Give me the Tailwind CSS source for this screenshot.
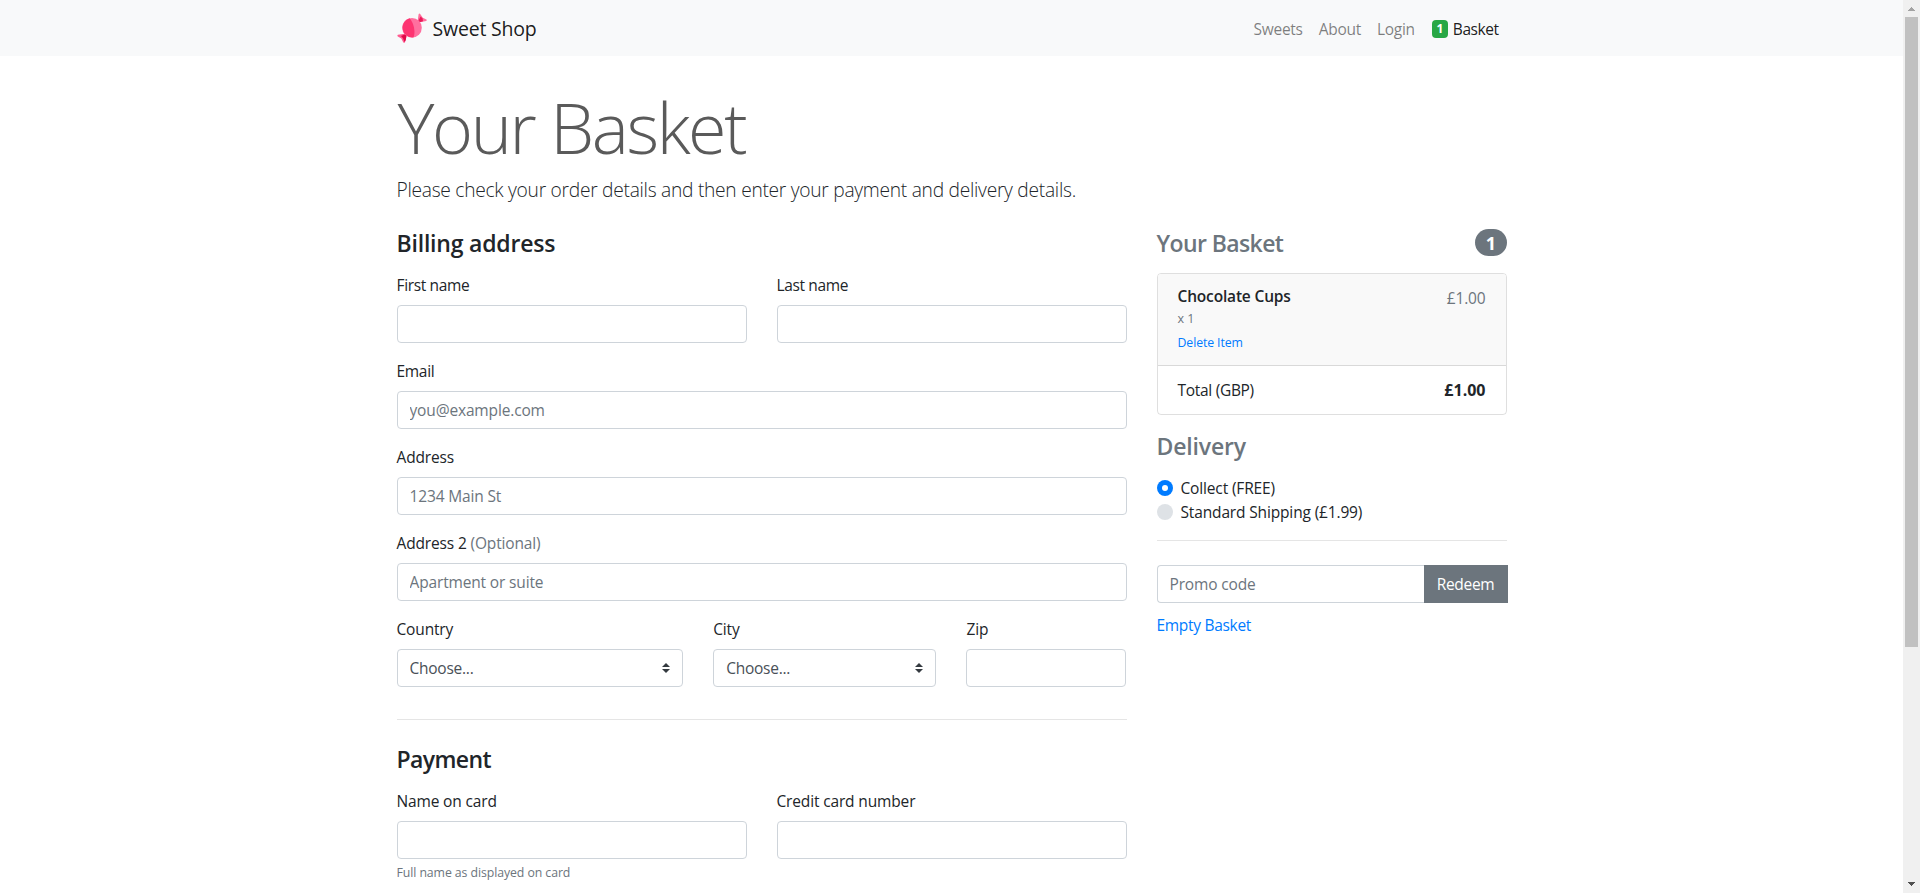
<!DOCTYPE html>
<html lang="en">
<head>
<meta charset="utf-8">
<title>Sweet Shop - Your Basket</title>
<script src="https://cdn.jsdelivr.net/npm/@tailwindcss/browser@4"></script>
</head>
<body class="flex h-[893px] overflow-hidden bg-white font-['Open_Sans','Noto_Sans',sans-serif] text-[15.5px] leading-6 tracking-[-0.15px] text-[#212529]">
<div class="h-full min-w-0 flex-1 overflow-hidden">
  <nav class="h-14 bg-[#f8f9fa]">
    <div class="mx-auto flex h-full w-[1110px] items-center justify-between">
      <a href="#" class="flex items-center text-[19.5px] leading-[30px] tracking-[-0.2px] text-black/90">
        <svg class="mr-[6px] size-[30px]" viewBox="0 0 30 30">
          <path d="M20.500 9 21.600 1.200Q22.200.2 23.200.9L25.800 4.800 29.400 6.400Q30.200 7.200 29.200 7.900L21.500 9.600Z" fill="#ff6f9c"/>
          <path d="M20.800 8.800 23.600 3.600 25.600 5.400 26 8.300 21.500 9.500Z" fill="#ea1a58"/>
          <path d="M9.500 20.500.9 21.800Q-.1 22.500.8 23.400L4.300 25.400 6.200 29.200Q7.200 30.200 8 29.200L10.200 21.300Z" fill="#ff5c90"/>
          <path d="M9.600 20.800 4 22.900 6 25.300 7.600 29 8.800 27Z" fill="#e00a48"/>
          <circle cx="15" cy="14.700" r="9.800" fill="#ff6f9f"/>
          <path d="M12.800 5.200A9.800 9.800 0 0 0 16.500 24.400C18.700 19 17 10.500 12.800 5.200Z" fill="#fd3471"/>
        </svg>
        <span class="pt-px">Sweet Shop</span>
      </a>
      <div class="flex items-center gap-4 pt-px pr-2 tracking-[-0.28px] text-black/50">
        <a href="#">Sweets</a>
        <a href="#">About</a>
        <a href="#" class="pr-px">Login</a>
        <a href="#" class="flex items-center tracking-[-0.45px] text-black/90"><span class="mr-[5px] flex h-[18px] w-4 items-center justify-center rounded-[4px] bg-[#28a745] text-[12px] leading-none font-bold text-white">1</span>Basket</a>
      </div>
    </div>
  </nav>
  <main class="mx-auto w-[1110px] pt-6">
    <h1 class="mb-2 ml-[1px] h-[86.4px] pt-[4px] text-[70px] leading-[86.4px] font-light tracking-[-2.4px] text-[#5a5a5a]">Your Basket</h1>
    <p class="mb-6 h-[30px] pt-px text-[19.2px] leading-[30px] font-light tracking-[-0.27px]">Please check your order details and then enter your payment and delivery details.</p>
    <div class="flex gap-[30px]">
      <form class="w-[730px] shrink-0">
        <h4 class="mb-4 h-[28.800px] pt-px text-[23px] leading-[28.800px] font-semibold tracking-[-0.2px]">Billing address</h4>
        <div class="mb-4 grid grid-cols-2 gap-[30px]">
          <div><label class="mb-2 block tracking-[-0.36px]">First name</label><input class="block h-[38px] w-full rounded-[4px] border border-[#ced4da] px-3"></div>
          <div><label class="mb-2 block tracking-[-0.36px]">Last name</label><input class="block h-[38px] w-full rounded-[4px] border border-[#ced4da] px-3"></div>
        </div>
        <div class="mb-4"><label class="mb-2 block tracking-[-0.3px]">Email</label><input placeholder="you@example.com" class="block h-[38px] w-full rounded-[4px] border border-[#ced4da] px-3 placeholder:text-[#6c757d]"></div>
        <div class="mb-4"><label class="mb-2 block">Address</label><input placeholder="1234 Main St" class="block h-[38px] w-full rounded-[4px] border border-[#ced4da] px-3 placeholder:text-[#6c757d]"></div>
        <div class="mb-4"><label class="mb-2 block">Address 2 <span class="text-[#6c757d]">(Optional)</span></label><input placeholder="Apartment or suite" class="block h-[38px] w-full rounded-[4px] border border-[#ced4da] px-3 placeholder:text-[#6c757d]"></div>
        <div class="flex gap-[30px]">
          <div class="w-[286.670px]"><label class="mb-2 block">Country</label>
            <div class="relative"><select class="block h-[38px] w-full appearance-none rounded-[4px] border border-[#ced4da] bg-white px-3 tracking-[-0.25px] text-[#495057]"><option>Choose...</option></select><svg class="absolute top-[14px] right-[13px] h-[10px] w-2" viewBox="0 0 4 5"><path fill="#343a40" d="M2 0L0 2h4zm0 5L0 3h4z"/></svg></div></div>
          <div class="w-[223.330px]"><label class="mb-2 block">City</label>
            <div class="relative"><select class="block h-[38px] w-full appearance-none rounded-[4px] border border-[#ced4da] bg-white px-3 tracking-[-0.25px] text-[#495057]"><option>Choose...</option></select><svg class="absolute top-[14px] right-[13px] h-[10px] w-2" viewBox="0 0 4 5"><path fill="#343a40" d="M2 0L0 2h4zm0 5L0 3h4z"/></svg></div></div>
          <div class="w-40"><label class="mb-2 block">Zip</label><input class="block h-[38px] w-full rounded-[4px] border border-[#ced4da] px-3"></div>
        </div>
        <hr class="mt-8 mb-6 border-t border-black/10">
        <h4 class="mb-4 h-[28.800px] pt-px text-[23px] leading-[28.800px] font-semibold tracking-[-0.6px]">Payment</h4>
        <div class="grid grid-cols-2 gap-[30px]">
          <div><label class="mb-2 block">Name on card</label><input class="block h-[38px] w-full rounded-[4px] border border-[#ced4da] px-3"><small class="block pt-[2px] text-[12.3px] leading-6 tracking-[-0.08px] text-[#6c757d]">Full name as displayed on card</small></div>
          <div><label class="mb-2 block">Credit card number</label><input class="block h-[38px] w-full rounded-[4px] border border-[#ced4da] px-3"></div>
        </div>
      </form>
      <aside class="w-[350px] shrink-0">
        <h4 class="mb-4 flex h-[28.800px] items-center justify-between text-[23px] leading-[28.800px] font-semibold tracking-[-0.6px] text-[#6c757d]"><span class="pt-[2px]">Your Basket</span><span class="flex h-[27px] w-8 items-center justify-center rounded-full bg-[#6c757d] pt-px text-[18px] leading-none font-bold text-white">1</span></h4>
        <ul class="mb-4 overflow-hidden rounded-[4px] border border-black/[0.125]">
          <li class="flex h-[92px] justify-between border-b border-black/[0.125] bg-[#f9f9f9] px-5 py-3">
            <div class="pt-px">
              <h6 class="text-[15.5px] leading-[19.200px] font-semibold tracking-[-0.17px]">Chocolate Cups</h6>
              <small class="block pt-px text-[12.5px] leading-6 tracking-normal text-[#6c757d]">x 1</small>
              <a href="#" class="block text-[12.3px] leading-6 tracking-[-0.1px] text-[#007bff]">Delete Item</a>
            </div>
            <span class="text-[#6c757d]">£1.00</span>
          </li>
          <li class="flex h-[48px] justify-between px-5 py-3"><span class="tracking-[-0.3px]">Total (GBP)</span><strong class="text-[16px] font-bold tracking-normal">£1.00</strong></li>
        </ul>
        <h4 class="mb-4 h-[28.800px] pt-px text-[23px] leading-[28.800px] font-semibold tracking-[-0.15px] text-[#6c757d]">Delivery</h4>
        <div class="flex items-center"><span class="mr-2 flex size-4 items-center justify-center rounded-full bg-[#007bff]"><span class="size-1.5 rounded-full bg-white"></span></span>Collect (FREE)</div>
        <div class="flex items-center"><span class="mr-2 size-4 rounded-full bg-[#dee2e6]"></span>Standard Shipping (£1.99)</div>
        <hr class="mt-4 mb-6 border-t border-black/10">
        <div class="flex w-[351px]"><input placeholder="Promo code" class="block h-[38px] min-w-0 flex-1 rounded-l-[4px] border border-r-0 border-[#ced4da] px-3 placeholder:text-[#6c757d]"><button class="h-[38px] w-21 bg-[#6c757d] tracking-[-0.3px] text-white">Redeem</button></div>
        <a href="#" class="mt-[10px] block tracking-[-0.3px] text-[#007bff]">Empty Basket</a>
      </aside>
    </div>
  </main>
</div>
<div class="flex h-full w-[17px] shrink-0 flex-col items-center bg-[#f0f0f0]">
  <svg class="h-[17px] w-[17px] shrink-0" viewBox="0 0 17 17" shape-rendering="crispEdges"><path d="M8 7h1v1h1v1h1v1h1v1H5v-1h1V9h1V8h1z" fill="#a3a3a3"/></svg>
  <div class="h-[630px] w-[13px] shrink-0 bg-[#c1c1c1]"></div>
  <svg class="mt-auto h-[17px] w-[17px] shrink-0" viewBox="0 0 17 17" shape-rendering="crispEdges"><path d="M5 6h7v1h-1v1h-1v1H9v1H8V9H7V8H6V7H5z" fill="#505050"/></svg>
</div>
</body>
</html>
